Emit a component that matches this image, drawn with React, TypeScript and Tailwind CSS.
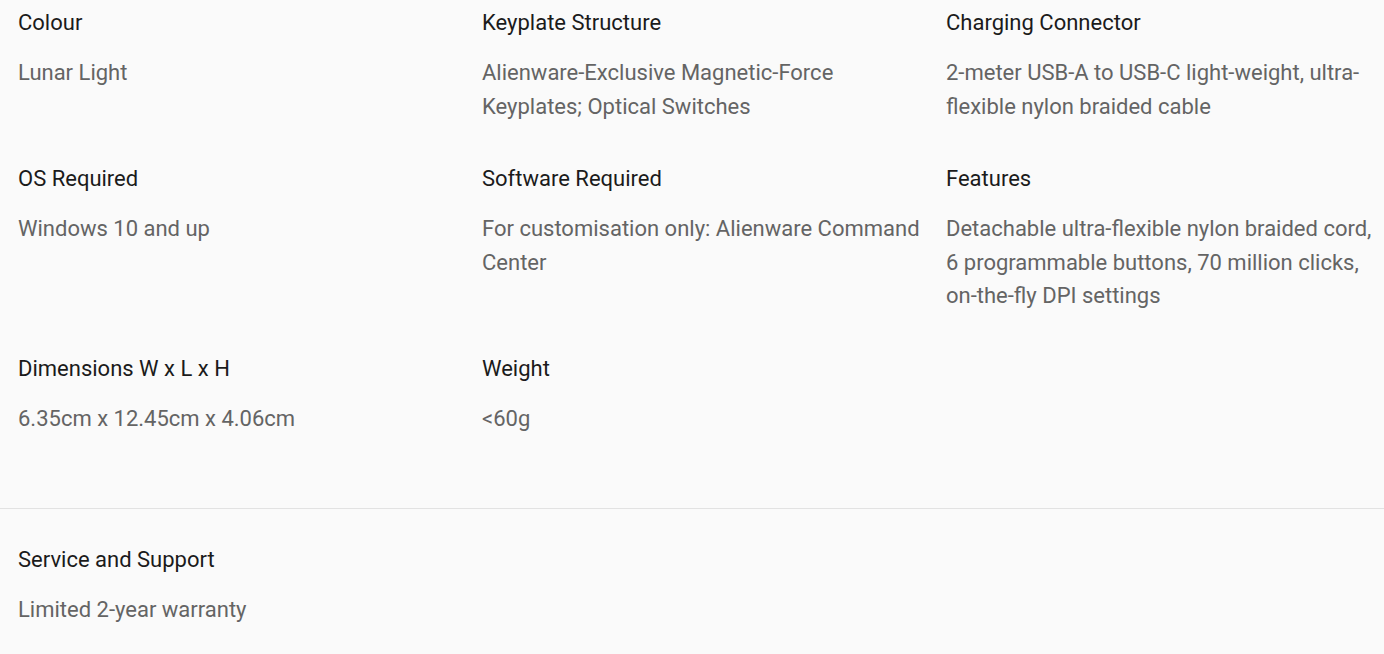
const specs = [
  { label: "Colour", value: "Lunar Light" },
  { label: "Keyplate Structure", value: "Alienware-Exclusive Magnetic-Force Keyplates; Optical Switches" },
  { label: "Charging Connector", value: "2-meter USB-A to USB-C light-weight, ultra-flexible nylon braided cable" },
  { label: "OS Required", value: "Windows 10 and up" },
  { label: "Software Required", value: "For customisation only: Alienware Command Center" },
  {
    label: "Features",
    value: "Detachable ultra-flexible nylon braided cord, 6 programmable buttons, 70 million clicks, on-the-fly DPI settings",
  },
  { label: "Dimensions W x L x H", value: "6.35cm x 12.45cm x 4.06cm" },
  { label: "Weight", value: "<60g" },
];

function Spec({ label, value }: { label: string; value: string }) {
  return (
    <div>
      <h3 className="text-[22px] leading-[30px] text-[#1b1b1b]">{label}</h3>
      <p className="mt-[18px] text-[22px] leading-[33.5px] text-[#646464]">{value}</p>
    </div>
  );
}

export default function App() {
  return (
    <div
      className="min-h-screen w-full bg-[#fafafa]"
      style={{ fontFamily: "Roboto, 'Noto Sans', sans-serif" }}
    >
      <section className="border-b border-[#e2e2e2] pb-[73px] pl-[18px] pt-[8px]">
        <div className="grid grid-cols-[440px_440px_1fr] gap-x-6 gap-y-[41px]">
          {specs.map((s) => (
            <Spec key={s.label} label={s.label} value={s.value} />
          ))}
        </div>
      </section>

      <section className="pl-[18px] pt-[36px]">
        <Spec label="Service and Support" value="Limited 2-year warranty" />
      </section>
    </div>
  );
}
